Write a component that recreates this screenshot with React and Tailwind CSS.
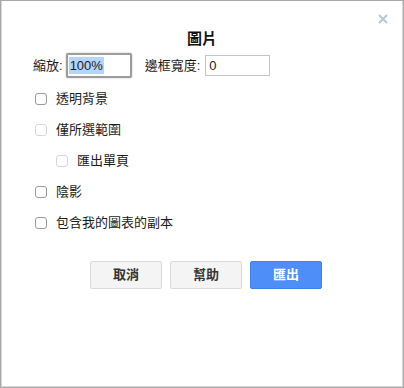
import React from "react";

const FONT = "font-['Liberation_Sans','Noto_Sans_CJK_TC',sans-serif]";

const Checkbox = ({ label, disabled, indent }) => (
  <div className={`flex h-[31px] items-center ${indent ? "pl-[23px]" : "pl-[2px]"}`}>
    <span
      className={`h-[12px] w-[12px] rounded-[3px] border bg-white ${
        disabled ? "border-[#d6d6d6]" : "border-[#9a9a9a]"
      }`}
    />
    <span className="ml-[9px] text-[13px] leading-none text-[#1a1a1a]">{label}</span>
  </div>
);

const Button = ({ children, primary }) => (
  <button
    type="button"
    className={`h-[28px] w-[72px] rounded-[2px] border text-[13px] font-bold ${
      primary
        ? "border-[#3f7fe9] bg-[#4d8ef9] text-white"
        : "border-[#dadada] bg-[#f4f4f4] text-[#333]"
    }`}
  >
    {children}
  </button>
);

export default function App() {
  return (
    <div
      className={`${FONT} relative h-[388px] w-[404px] border border-[#a8a8a8] bg-white text-[#1a1a1a] shadow-[inset_1px_0_0_#d6d6d6,inset_-1px_0_0_#d6d6d6,inset_0_-1px_0_#d6d6d6]`}
    >
      <button type="button" className="absolute right-[15px] top-[13px] h-[10px] w-[10px]" aria-label="close">
        <svg viewBox="0 0 10 10" className="h-[10px] w-[10px]">
          <path d="M1 1L9 9M9 1L1 9" stroke="#b8c4d8" strokeWidth="2" />
        </svg>
      </button>

      <div className="px-[32px] pt-[28px]">
        <h2 className="text-center text-[15px] font-bold leading-[20px] text-[#111]">圖片</h2>

        <div className="mt-[4px] flex h-[25px] items-center text-[13px]">
          <span>縮放:</span>
          <div className="ml-[3px] flex h-[25px] w-[66px] items-center rounded-[2px] border-2 border-[#9c9c9c] bg-white pl-[1px] shadow-[0_0_2px_#bbbbbb]">
            <span className="bg-[#b4d5fe] px-[1px] leading-[17px]">100%</span>
          </div>
          <span className="ml-[13px]">邊框寬度:</span>
          <div className="ml-[5px] flex h-[21px] w-[65px] items-center border border-[#c4c4c4] bg-white pl-[3px]">
            0
          </div>
        </div>

        <div className="mt-[5px]">
          <Checkbox label="透明背景" />
          <Checkbox label="僅所選範圍" disabled />
          <Checkbox label="匯出單頁" disabled indent />
          <Checkbox label="陰影" />
          <Checkbox label="包含我的圖表的副本" />
        </div>

        <div className="mt-[23px] flex gap-[8px] pl-[57px]">
          <Button>取消</Button>
          <Button>幫助</Button>
          <Button primary>匯出</Button>
        </div>
      </div>
    </div>
  );
}
